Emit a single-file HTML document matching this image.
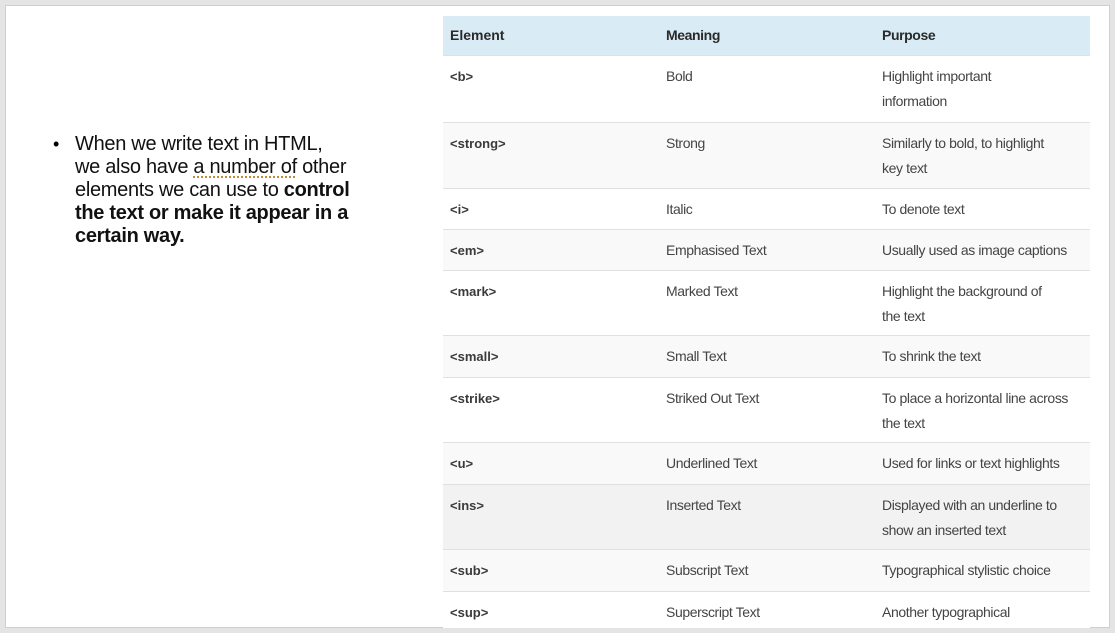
<!DOCTYPE html>
<html><head><style>
*{margin:0;padding:0;box-sizing:border-box}
body{width:1115px;height:633px;background:#e4e4e4;position:relative;overflow:hidden;font-family:"Liberation Sans",sans-serif}
#slide{position:absolute;left:5px;top:5px;width:1105px;height:623px;background:#fff;border:1px solid #cfcfcf}
.bul{position:absolute;left:75px;top:133px;font-size:20px;line-height:23px;color:#111;white-space:nowrap;letter-spacing:-0.3px}
.dot{position:absolute;left:53px;top:133px;font-size:18px;line-height:23px}
.u{text-decoration:underline dotted #c08a3a;text-underline-offset:3px}
.row{position:absolute;left:443px;width:647px;border-top:1.5px solid #e0e0e0;font-size:14px;line-height:25px;color:#444;letter-spacing:-0.4px;white-space:nowrap}
.row div{position:absolute;top:8px}
.c1{left:7px;font-weight:bold;color:#3a3a3a;font-size:13px;letter-spacing:0}
.c2{left:223px}
.c3{left:439px}
.hd{background:#d9ecf5;border-top:none;color:#222}
.hd div{font-weight:bold;top:7px;color:#2a2a2a;font-size:14px}
</style></head><body>
<div id="slide"></div>
<div class="dot">•</div>
<div class="bul">When we write text in HTML,<br>we also have <span class="u">a number of</span> other<br>elements we can use to <b>control</b><br><b>the text or make it appear in a</b><br><b>certain way.</b></div>

<div class="row hd" style="top:16px;height:39px"><div class="c1">Element</div><div class="c2">Meaning</div><div class="c3">Purpose</div></div>
<div class="row" style="top:55px;height:67px;background:#fff"><div class="c1">&lt;b&gt;</div><div class="c2">Bold</div><div class="c3">Highlight important<br>information</div></div>
<div class="row" style="top:122px;height:66px;background:#f9f9f9"><div class="c1">&lt;strong&gt;</div><div class="c2">Strong</div><div class="c3">Similarly to bold, to highlight<br>key text</div></div>
<div class="row" style="top:188px;height:41px;background:#fff"><div class="c1">&lt;i&gt;</div><div class="c2">Italic</div><div class="c3">To denote text</div></div>
<div class="row" style="top:229px;height:41px;background:#f9f9f9"><div class="c1">&lt;em&gt;</div><div class="c2">Emphasised Text</div><div class="c3">Usually used as image captions</div></div>
<div class="row" style="top:270px;height:65px;background:#fff"><div class="c1">&lt;mark&gt;</div><div class="c2">Marked Text</div><div class="c3">Highlight the background of<br>the text</div></div>
<div class="row" style="top:335px;height:42px;background:#f9f9f9"><div class="c1">&lt;small&gt;</div><div class="c2">Small Text</div><div class="c3">To shrink the text</div></div>
<div class="row" style="top:377px;height:65px;background:#fff"><div class="c1">&lt;strike&gt;</div><div class="c2">Striked Out Text</div><div class="c3">To place a horizontal line across<br>the text</div></div>
<div class="row" style="top:442px;height:42px;background:#f9f9f9"><div class="c1">&lt;u&gt;</div><div class="c2">Underlined Text</div><div class="c3">Used for links or text highlights</div></div>
<div class="row" style="top:484px;height:65px;background:#f2f2f2"><div class="c1">&lt;ins&gt;</div><div class="c2">Inserted Text</div><div class="c3">Displayed with an underline to<br>show an inserted text</div></div>
<div class="row" style="top:549px;height:42px;background:#f9f9f9"><div class="c1">&lt;sub&gt;</div><div class="c2">Subscript Text</div><div class="c3">Typographical stylistic choice</div></div>
<div class="row" style="top:591px;height:37px;background:#fff"><div class="c1">&lt;sup&gt;</div><div class="c2">Superscript Text</div><div class="c3">Another typographical</div></div>
</body></html>
